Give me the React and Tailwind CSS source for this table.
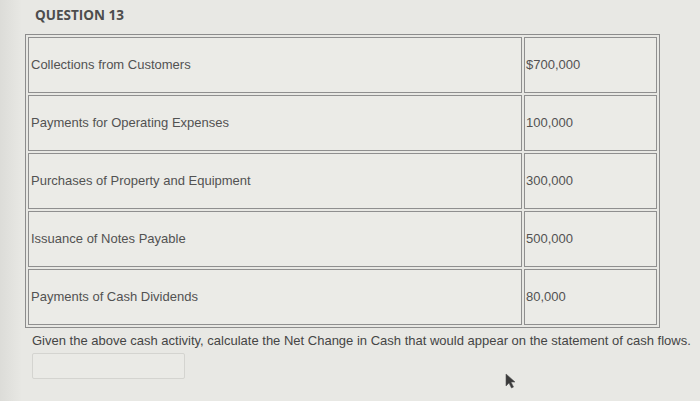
import React from 'react';

const rows = [
  ['Collections from Customers', '$700,000'],
  ['Payments for Operating Expenses', '100,000'],
  ['Purchases of Property and Equipment', '300,000'],
  ['Issuance of Notes Payable', '500,000'],
  ['Payments of Cash Dividends', '80,000'],
];

export default function App() {
  return (
    <div
      className="relative w-[700px] h-[401px] overflow-hidden bg-[#e8e8e4] text-[#525252]"
      style={{ fontFamily: '"Liberation Sans", Arial, sans-serif' }}
    >
      <div className="absolute inset-y-0 left-0 w-[22px] bg-gradient-to-r from-[#dcdcd8] to-transparent" />

      <div className="relative pl-[35px] pt-[5px]">
        <h1
          className="text-[13.5px] font-bold text-[#4d4d4d] leading-5"
          style={{ fontFamily: '"Open Sans", sans-serif' }}
        >
          QUESTION 13
        </h1>
      </div>

      {/* Cash activity table */}
      <div className="relative ml-[25px] mt-[9px] w-[635px] border border-[#8c8c8c] p-[2px] grid grid-cols-[494px_1fr] gap-[2px]">
        {rows.map(([label, amount]) => (
          <React.Fragment key={label}>
            <div className="h-[56px] border border-[#8f8f8f] bg-[#ebebe7] flex items-center pl-[2px] text-[13px]">
              {label}
            </div>
            <div className="h-[56px] border border-[#8f8f8f] bg-[#ebebe7] flex items-center pl-[1px] text-[13px]">
              {amount}
            </div>
          </React.Fragment>
        ))}
      </div>

      <p className="relative ml-[32px] mt-[5px] text-[13px] text-[#454545] leading-4">
        Given the above cash activity, calculate the Net Change in Cash that would appear on the statement of cash flows.
      </p>

      <div className="relative ml-[32px] mt-[4px] w-[153px] h-[26px] border border-[#d4d4d0] bg-[#eaeae6] rounded-[2px]" />

      {/* mouse cursor */}
      <svg className="absolute left-[505px] top-[373px]" width="12" height="16" viewBox="0 0 12 16">
        <path d="M1 1 L1 13 L4 10 L6.5 15 L8.5 14 L6 9 L10 9 Z" fill="#3a3a3a" stroke="#555" strokeWidth="0.6" />
      </svg>
    </div>
  );
}
